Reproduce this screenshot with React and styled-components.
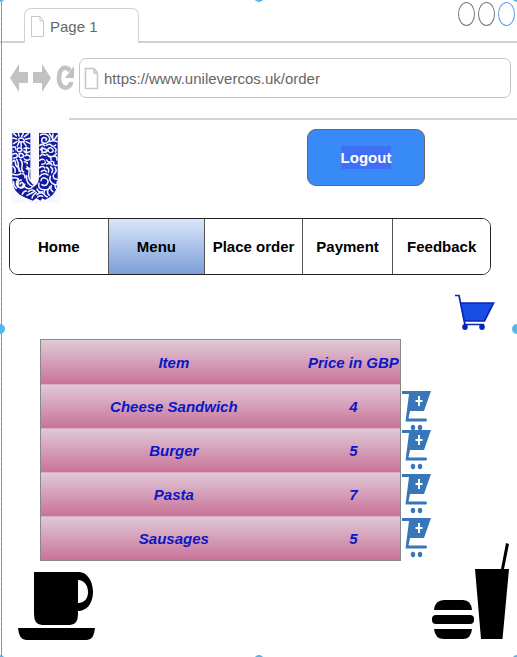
import React from "react";
import styled, { createGlobalStyle } from "styled-components";

const GlobalStyle = createGlobalStyle`
  * { box-sizing: border-box; }
  body {
    margin: 0;
    background: #fff;
    font-family: "Liberation Sans", Arial, sans-serif;
    font-size: 15px;
  }
  svg { display: block; flex: none; }
`;

const Window = styled.div`
  position: relative;
  min-height: 100vh;
  overflow: hidden;
  background: #fff;
`;

const SelectionEdge = styled.div`
  position: absolute;
  left: 1px;
  top: 0;
  bottom: 0;
  width: 1px;
  background: repeating-linear-gradient(#5aa9e6 0 3px, #7d8790 3px 5px);
`;

const Handle = styled.span`
  position: absolute;
  width: 10px;
  height: 10px;
  border-radius: 50%;
  background: #55b5ef;
  left: ${(p) => p.$x};
  top: ${(p) => p.$y};
  transform: translate(-50%, -50%);
`;

const TabBar = styled.header`
  display: flex;
  align-items: flex-end;
  height: 43px;
`;

const Rule = styled.div`
  width: 24px;
  height: 2px;
  background: #d2d2d2;
`;

const Tab = styled.div`
  display: flex;
  align-items: center;
  gap: 5px;
  width: 115px;
  height: 35px;
  padding-left: 5px;
  border: 1px solid #d2d2d2;
  border-bottom: 0;
  border-radius: 7px 7px 0 0;
  color: #666;
`;

const TabEnd = styled.div`
  display: flex;
  flex: 1;
  flex-direction: column;
  align-items: flex-end;
  justify-content: space-between;
  height: 100%;
  padding-top: 2px;
`;

const WindowButtons = styled.div`
  display: flex;
  gap: 3px;
  padding-right: 2px;
`;

const WindowButton = styled.button`
  width: 17px;
  height: 24px;
  padding: 0;
  border: 1px solid ${(p) => p.$color};
  border-radius: 50%;
  background: transparent;
`;

const FullRule = styled.div`
  align-self: stretch;
  height: 2px;
  background: #d2d2d2;
`;

const Toolbar = styled.div`
  display: flex;
  align-items: center;
  gap: 5px;
  padding: 15px 6px 0 10px;
`;

const IconButton = styled.button`
  padding: 0;
  border: 0;
  background: transparent;
  cursor: pointer;
`;

const Address = styled.label`
  display: flex;
  flex: 1;
  align-items: center;
  gap: 5px;
  min-width: 0;
  height: 40px;
  padding-left: 4px;
  border: 1px solid #c4c4c4;
  border-radius: 7px;
`;

const AddressInput = styled.input`
  flex: 1;
  min-width: 0;
  padding: 0;
  border: 0;
  outline: 0;
  background: transparent;
  color: #666;
  font: inherit;
`;

const PageRule = styled.div`
  height: 2px;
  margin: 20px 0 0 69px;
  background: #d2d2d2;
`;

const Banner = styled.div`
  display: flex;
  align-items: flex-start;
  justify-content: space-between;
  padding: 9px 92px 0 11px;
`;

const LogoutButton = styled.button`
  width: 118px;
  height: 57px;
  padding: 0;
  border: 1px solid #666;
  border-radius: 9px;
  background: #388bf6;
  color: #fff;
  font: inherit;
  font-weight: bold;
`;

const Highlight = styled.span`
  display: inline-block;
  line-height: 23px;
  background: #3f6ff5;
`;

const Nav = styled.nav`
  display: grid;
  grid-template-columns: 98fr 97fr 98fr 91fr 98fr;
  height: 57px;
  margin: 14px 26px 0 9px;
  border: 1px solid #222;
  border-radius: 9px;
  overflow: hidden;
`;

const NavLink = styled.a`
  display: flex;
  align-items: center;
  justify-content: center;
  border-left: ${(p) => (p.$first ? "0" : "1px solid #555")};
  background: ${(p) => (p.$active ? "linear-gradient(#dae6fa, #7c9fd8)" : "#fff")};
  color: #000;
  font-weight: bold;
  white-space: nowrap;
  text-decoration: none;
`;

const BasketRow = styled.div`
  display: flex;
  justify-content: flex-end;
  padding: 19px 22px 0 0;
`;

const MenuArea = styled.main`
  display: flex;
  align-items: flex-start;
  padding: 8px 86px 0 40px;
`;

const MenuTable = styled.table`
  flex: 1;
  width: 100%;
  min-width: 0;
  table-layout: fixed;
  border-collapse: separate;
  border-spacing: 0;
  border: 1px solid #888;
  color: #0718c4;
  font-style: italic;
  font-weight: bold;
`;

const Row = styled.tr`
  height: 44px;
  background: linear-gradient(#e0cbd8, #c97298);
`;

const Cell = styled.td`
  width: ${(p) => (p.$price ? "26%" : "74%")};
  padding: 0;
  border-top: ${(p) => (p.$plain ? "0" : "1px solid #dcadc2")};
  text-align: center;
  white-space: nowrap;
`;

const AddColumn = styled.div`
  display: flex;
  flex-direction: column;
  padding: 52px 0 0 1px;
`;

const AddButton = styled(IconButton)`
  display: flex;
  align-items: flex-start;
  height: ${(p) => (p.$close ? "39px" : "44px")};
`;

const Footer = styled.footer`
  display: flex;
  align-items: flex-end;
  justify-content: space-between;
  padding: 0 8px 17px 18px;
  margin-top: -19px;
`;

function PageIcon({ bold }) {
  return (
    <svg width="15" height="23" viewBox="0 0 15 23" fill="none" stroke="#c8c8c8" strokeWidth={bold ? 1.6 : 1} aria-hidden="true">
      <path d="M1.5 1.5H10L13.5 6V21.5H1.5ZM10 1.5V6H13.5" />
    </svg>
  );
}

function ArrowIcon({ forward }) {
  return (
    <svg width="18" height="28" viewBox="0 0 18 28" fill="#c2c2c2" aria-hidden="true">
      <path d={forward ? "M18 14 9 0V8H0V19H9V28Z" : "M0 14 9 0V8H18V19H9V28Z"} />
    </svg>
  );
}

function ReloadIcon() {
  return (
    <svg width="18" height="26" viewBox="0 0 18 26" aria-hidden="true">
      <path d="M14 6C11 1 6 2 4 7C2 13 3 20 7 22C11 24 15 21 15 17" fill="none" stroke="#c2c2c2" strokeWidth="4.500" />
      <path d="M18 1V13H9Z" fill="#c2c2c2" />
    </svg>
  );
}

function Logo() {
  return (
    <svg width="50" height="75" viewBox="0 0 150 225" role="img" aria-label="Unilever">
      <rect width="150" height="222" fill="#f8f8fe" />
      <path
        fill="#101aa0"
        d="M4 12H58V140C58 158 62 166 70 168H74C80 166 84 156 84 140V12H140V150C140 188 124 204 102 212L94 208 88 215 76 207 66 215 44 206C18 196 4 180 4 148Z"
      />
      <g fill="none" stroke="#f8f8fe" strokeWidth="4.600" strokeLinecap="round">
        <path d="M8 13l8 8M22 13l2 8M37 13l-5 9M52 14l-12 9M5 27l12 3M57 28l-13 3M8 44l10-7M19 51l4-10M31 54l-1-12M45 50l-7-10M56 43l-11-5M23 30q7-6 14 0t-1 8q-9 4-13-3" />
        <path d="M5 55q8-5 9 3t-8 8M20 58q8-4 12 2t-8 8q-8 0-4-10M39 58q9-4 15 0M39 66q5 8 17 2M46 54v22M5 76q11-6 14 2T7 87M24 74q9-3 13 4t-7 8q-8-1-5-8M43 80q12-5 14 4M40 90q9 8 16 0" />
        <path d="M6 97q6-8 7 4t7 13 4 12M17 91q6 10 5 20t7 17M28 92q8 8 5 20t5 17M6 112q9 7 6 18M40 98q12 1 8 9t9 12M46 119q10 0 8 12M5 135q14 6 25-1M35 134q9 4 7 12M5 147q9-2 17 3" />
        <path d="M31 153a10 12 0 1 0 10 13M27 165a5 6 0 1 1 9 5q-8 10-16 3-8-12 2-22M8 158q-2 12 8 20M47 140q-2 19 10 28t16-4M53 134q-1 16 8 24M42 174q10 9 21 2M46 186q-9 0-12 10M52 188q12-9 20-1M48 199q10-5 20-10M63 207q3-9 13-16" />
        <path d="M88 18q14-7 24 3t-4 20q-13 5-16-5 0-12 9-10t4 8M115 14l9 12M126 15l-2 14M138 20q-6 13-13 12M116 38q10-6 22 0M86 49q8-6 15 1M106 49q10-6 15 0t13-1" />
        <path d="M88 62q9-8 17 0t-9 8M93 55v17M112 58q8-5 13 3t-7 9q-10-3-6-12M130 56q9 4 3 13M87 81q8-8 16-2M107 76q14 15 29-2M112 82q10 2 8 11M129 82q10-1 9 11M86 94q9-7 15 2t-8 10M107 93q5 10 17 4M107 105q11-5 16 3M128 99q-2 13 10 10" />
        <path d="M86 116q10-8 15 1M91 128q9-8 15 0M106 115q10 4 6 15M119 114q10 7 3 17M132 116q8 9-3 19M86 142q10-13 25-4M90 155q2-12 14-7 12 5 4 18-8 6-15 1M84 163q-5 18 14 19t18-9M118 142q-5 16 9 23t12-8M127 139q-2 12 11 12" />
        <path d="M78 180q5 12 16 8M78 197q9-10 20-2M101 184q-7 13 8 20M112 181q-6 10 3 18M121 170q-5 12 5 18M80 204q8-6 15-2M132 170l2 8" />
      </g>
      <g fill="#101aa0">
        <ellipse cx="11" cy="65" rx="3" ry="4" />
        <ellipse cx="48" cy="109" rx="4" ry="3" />
        <ellipse cx="98" cy="98" rx="3" ry="5" />
        <ellipse cx="118" cy="64" rx="4" ry="5" />
      </g>
    </svg>
  );
}

function BasketIcon() {
  return (
    <svg width="40" height="37" viewBox="0 0 40 37" aria-hidden="true">
      <path d="M5 9H38.5L29.5 27H9Z" fill="#174fe5" />
      <path d="M0 1.5H4L10 31M5 9H38.5L29.5 27H9M10 30.5H29" fill="none" stroke="#0826b5" strokeWidth="1.7" />
      <ellipse cx="10" cy="33" rx="2.8" ry="3" fill="#0826b5" />
      <ellipse cx="27" cy="33" rx="2.8" ry="3" fill="#0826b5" />
    </svg>
  );
}

function AddToCartIcon() {
  return (
    <svg width="29" height="40" viewBox="0 0 29 40" aria-hidden="true">
      <path d="M0 0H29L22 20H8L6.500 27.500H24Q26 29 24 30.500H3.500L7 3H0Z" fill="#3676b9" />
      <path d="M17 5V15M13.500 10H20.500" stroke="#fff" strokeWidth="2" />
      <ellipse cx="11" cy="36.500" rx="2.200" ry="2.800" fill="#3676b9" />
      <ellipse cx="18" cy="36.500" rx="2.200" ry="2.800" fill="#3676b9" />
    </svg>
  );
}

function CupIcon() {
  return (
    <svg width="77" height="68" viewBox="0 0 77 68" aria-hidden="true">
      <path fillRule="evenodd" d="M16 0H61C69 0 75 9 75 20S69 39 60 39V42Q60 53 52 53H24Q16 53 16 42ZM60 8V31C66 31 70 27 70 20S66 8 60 8Z" />
      <path d="M0 56H77Q76 68 69 68H8Q1 68 0 56Z" />
    </svg>
  );
}

function MealIcon() {
  return (
    <svg width="77" height="97" viewBox="0 0 77 97" aria-hidden="true">
      <path d="M2 67Q3 57 12 57H31Q39 57 40 67ZM2 86H40Q39 96 31 96H12Q3 96 2 86Z" />
      <rect y="72" width="42" height="9" rx="4" />
      <path d="M43 26H69L74 0 77 1 72 26H77L70.500 96H49Z" />
    </svg>
  );
}

const links = ["Home", "Menu", "Place order", "Payment", "Feedback"];
const items = [
  ["Cheese Sandwich", 4],
  ["Burger", 5],
  ["Pasta", 7],
  ["Sausages", 5],
];
const above = "-3px";
const below = "calc(100% + 3px)";
const handles = [
  ["0%", above], ["50%", above], ["100%", above],
  ["0%", "50%"], ["100%", "50%"],
  ["0%", below], ["50%", below], ["100%", below],
];

export default function App() {
  return (
    <Window>
      <GlobalStyle />
      <TabBar>
        <Rule />
        <Tab><PageIcon />Page 1</Tab>
        <TabEnd>
          <WindowButtons>
            <WindowButton $color="#777" aria-label="Minimise" />
            <WindowButton $color="#777" aria-label="Maximise" />
            <WindowButton $color="#5a9bf5" aria-label="Close" />
          </WindowButtons>
          <FullRule />
        </TabEnd>
      </TabBar>
      <Toolbar>
        <IconButton aria-label="Back"><ArrowIcon /></IconButton>
        <IconButton aria-label="Forward"><ArrowIcon forward /></IconButton>
        <IconButton aria-label="Reload"><ReloadIcon /></IconButton>
        <Address>
          <PageIcon bold />
          <AddressInput aria-label="Address" defaultValue="https://www.unilevercos.uk/order" />
        </Address>
      </Toolbar>
      <PageRule />
      <Banner>
        <Logo />
        <LogoutButton><Highlight>Logout</Highlight></LogoutButton>
      </Banner>
      <Nav>
        {links.map((name, i) => (
          <NavLink key={name} href="#" $first={i === 0} $active={name === "Menu"}>{name}</NavLink>
        ))}
      </Nav>
      <BasketRow>
        <IconButton aria-label="Basket"><BasketIcon /></IconButton>
      </BasketRow>
      <MenuArea>
        <MenuTable>
          <thead>
            <Row>
              <Cell as="th" scope="col" $plain>Item</Cell>
              <Cell as="th" scope="col" $plain $price>Price in GBP</Cell>
            </Row>
          </thead>
          <tbody>
            {items.map(([name, price]) => (
              <Row key={name}>
                <Cell>{name}</Cell>
                <Cell $price>{price}</Cell>
              </Row>
            ))}
          </tbody>
        </MenuTable>
        <AddColumn>
          {items.map(([name], i) => (
            <AddButton key={name} $close={i === 0} aria-label={`Add ${name}`}>
              <AddToCartIcon />
            </AddButton>
          ))}
        </AddColumn>
      </MenuArea>
      <Footer>
        <CupIcon />
        <MealIcon />
      </Footer>
      <SelectionEdge />
      {handles.map(([x, y]) => <Handle key={x + y} $x={x} $y={y} />)}
    </Window>
  );
}
